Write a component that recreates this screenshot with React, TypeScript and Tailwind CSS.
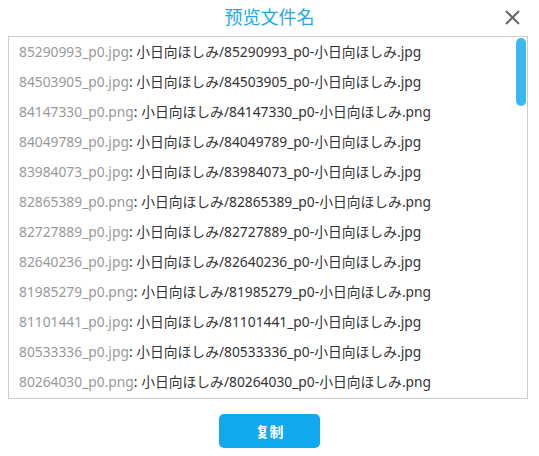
import React from "react";

const rows: [string, string][] = [
  ["85290993_p0.jpg", "85290993_p0-小日向ほしみ.jpg"],
  ["84503905_p0.jpg", "84503905_p0-小日向ほしみ.jpg"],
  ["84147330_p0.png", "84147330_p0-小日向ほしみ.png"],
  ["84049789_p0.jpg", "84049789_p0-小日向ほしみ.jpg"],
  ["83984073_p0.jpg", "83984073_p0-小日向ほしみ.jpg"],
  ["82865389_p0.png", "82865389_p0-小日向ほしみ.png"],
  ["82727889_p0.jpg", "82727889_p0-小日向ほしみ.jpg"],
  ["82640236_p0.jpg", "82640236_p0-小日向ほしみ.jpg"],
  ["81985279_p0.png", "81985279_p0-小日向ほしみ.png"],
  ["81101441_p0.jpg", "81101441_p0-小日向ほしみ.jpg"],
  ["80533336_p0.jpg", "80533336_p0-小日向ほしみ.jpg"],
  ["80264030_p0.png", "80264030_p0-小日向ほしみ.png"],
];

export default function App() {
  return (
    <div
      className="w-[539px] h-[456px] bg-white flex flex-col"
      style={{ fontFamily: '"Noto Sans", "Noto Sans CJK JP", sans-serif' }}
    >
      <div className="relative h-[36px] flex items-center justify-center">
        <span className="text-[18px] text-[#1fa8e8] leading-none -mt-[2px]">预览文件名</span>
        <svg
          className="absolute right-[19px] top-[10px]"
          width="15"
          height="15"
          viewBox="0 0 15 15"
        >
          <path d="M1 1L14 14M14 1L1 14" stroke="#666" strokeWidth="2" />
        </svg>
      </div>
      <div className="relative mx-[8px] w-[520px] h-[363px] border border-[#cccccc] overflow-hidden">
        <div className="flex flex-col">
          {rows.map(([a, b]) => (
            <div key={a} className="h-[30px] flex items-center pl-[10px] text-[13.8px] whitespace-nowrap">
              <span className="text-[#999]">{a}</span>
              <span className="text-[#333]">: 小日向ほしみ/{b}</span>
            </div>
          ))}
        </div>
        <div className="absolute right-[1px] top-[1px] w-[10px] h-[68px] rounded-full bg-[#3cb8f0]" />
      </div>
      <div className="flex justify-center pt-[15px]">
        <button className="w-[101px] h-[34px] rounded-[5px] bg-[#10a9ee] text-white text-[14px] font-bold">
          复制
        </button>
      </div>
    </div>
  );
}
